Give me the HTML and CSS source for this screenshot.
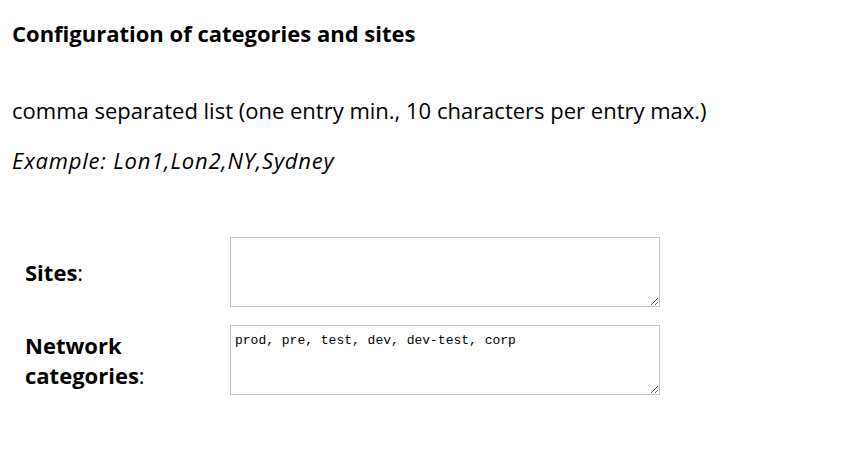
FILE: index.html
```html
<!DOCTYPE html>
<html>
<head>
<meta charset="utf-8">
<link rel="stylesheet" href="styles.css">
</head>
<body>
<h1 class="title">Configuration of categories and sites</h1>
<p class="note">comma separated list (one entry min., 10 characters per entry max.)</p>
<p class="example">Example: Lon1,Lon2,NY,Sydney</p>
<div class="form">
  <label class="label" for="sites"><b>Sites</b>:</label>
  <textarea id="sites" class="field"></textarea>
  <label class="label" for="cats"><b>Network categories</b>:</label>
  <textarea id="cats" class="field">prod, pre, test, dev, dev-test, corp</textarea>
</div>
</body>
</html>
```
FILE: styles.css
```css
html, body {
  margin: 0;
  background: #fff;
}
body {
  padding: 0 12px;
  font-family: "Open Sans", "Noto Sans", sans-serif;
  font-size: 22px;
  color: #000;
}
.title {
  margin: 0;
  padding-top: 18px;
  font-size: 22px;
  font-weight: 700;
  line-height: 30px;
}
.note {
  margin: 47px 0 0;
  line-height: 30px;
}
.example {
  margin: 20px 0 0;
  line-height: 30px;
  font-style: italic;
  letter-spacing: 0.8px;
}
.form {
  display: grid;
  grid-template-columns: 205px 430px;
  row-gap: 18px;
  margin-top: 62px;
  padding-left: 13px;
  align-items: center;
}
.label {
  max-width: 150px;
  line-height: 30px;
}
.label b {
  font-weight: 700;
}
.field {
  box-sizing: border-box;
  width: 430px;
  height: 70px;
  margin: 0;
  padding: 7px 4px 4px;
  border: 1px solid #c4c4c4;
  font-family: "Liberation Mono", monospace;
  font-size: 13px;
  resize: both;
}
```
